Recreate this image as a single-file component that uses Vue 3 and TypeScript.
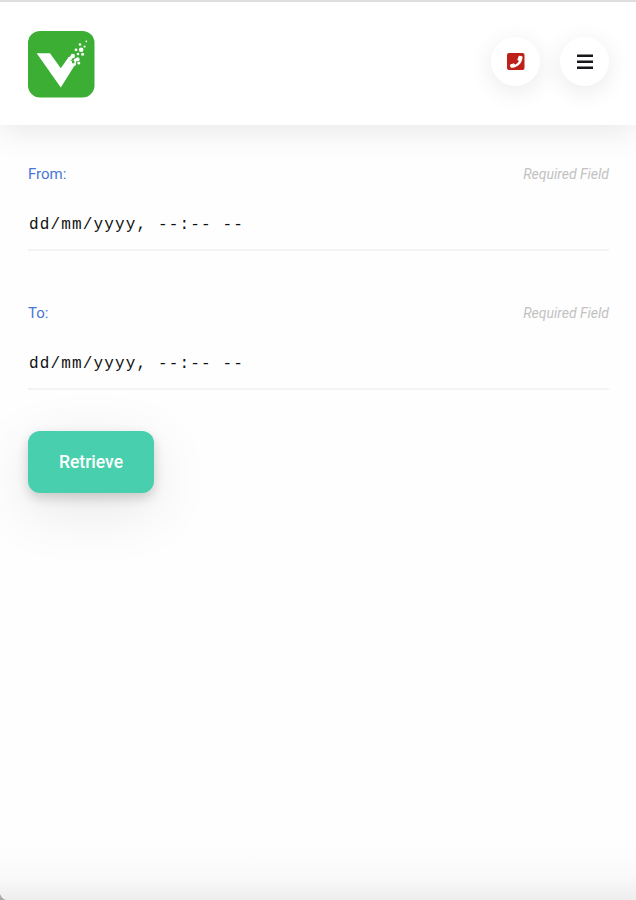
<script setup lang="ts">
interface Field {
  id: string
  label: string
}

const fields: Field[] = [
  { id: 'from', label: 'From:' },
  { id: 'to', label: 'To:' },
]
</script>

<template>
  <div class="page">
    <header class="header">
      <svg class="logo" viewBox="0 0 67 67" aria-label="Logo">
        <rect width="66.5" height="66.5" rx="12" fill="#3bae33" />
        <path fill="#fff" d="M8.7 22.2H22L32.8 37.2L40.5 26.2L43 25L44.5 27.5L42.5 30L45.5 29.5L47 27L49 29L47.5 33L32.8 56.5Z" />
        <g fill="#fff">
          <circle cx="44.8" cy="25" r="2.2" />
          <circle cx="49.6" cy="28.2" r="2" />
          <circle cx="50.8" cy="32" r="1.5" />
          <circle cx="46.3" cy="33.5" r="1.5" />
          <circle cx="53.2" cy="18.8" r="2.3" />
          <circle cx="48" cy="18.8" r="1.4" />
          <circle cx="50" cy="23" r="1.3" />
          <circle cx="54.6" cy="23.3" r="1.5" />
          <circle cx="52" cy="13.5" r="1.3" />
          <circle cx="56.6" cy="15.6" r="1.1" />
          <circle cx="58.3" cy="10.3" r=".9" />
        </g>
        <circle cx="45.2" cy="31" r="1.4" fill="#3bae33" />
      </svg>
      <nav class="actions">
        <button class="round" aria-label="Call">
          <svg class="icon" viewBox="0 0 18 18">
            <rect width="17.5" height="17" rx="2" fill="#bd2119" />
            <path fill="#fff" d="M12.6 2.7 15 3.3q.5.1.5.6C15.5 10 10.3 14.8 4.2 14.8q-.5 0-.6-.5L3 12.2q-.1-.5.4-.7l2.9-1.1q.4-.2.7.2l1.1 1.2q2.6-1.1 3.8-3.7l-1.3-1q-.4-.3-.2-.7l1.4-3.3q.3-.5.8-.4Z" />
          </svg>
        </button>
        <button class="round" aria-label="Menu">
          <svg class="icon" viewBox="0 0 18 18">
            <path fill="#17171b" d="M1 1.5h16v2.4H1zM1 7.5h16v2.4H1zM1 13.5h16v2.4H1z" />
          </svg>
        </button>
      </nav>
    </header>
    <main class="content">
      <section v-for="field in fields" :key="field.id" class="field">
        <div class="caption">
          <span class="label">{{ field.label }}</span>
          <em class="hint">Required Field</em>
        </div>
        <div class="value">dd/mm/yyyy, --:-- --</div>
      </section>
      <button class="submit">Retrieve</button>
    </main>
    <footer class="fade"></footer>
  </div>
</template>

<style>
body {
  margin: 0;
  background: #fff;
}
</style>

<style scoped>
.page {
  box-sizing: border-box;
  height: 900px;
  display: flex;
  flex-direction: column;
  overflow: hidden;
  border-top: 2px solid #dedede;
  background: #fefefe;
  font-family: Roboto, "Liberation Sans", sans-serif;
}

button {
  border: 0;
  padding: 0;
  font-family: inherit;
}

.header {
  box-sizing: border-box;
  height: 123px;
  flex: none;
  padding: 29px 27px 0 28px;
  display: flex;
  justify-content: space-between;
  align-items: flex-start;
  background: #fff;
  box-shadow: 0 4px 32px rgba(0, 0, 0, .1);
}

.logo {
  width: 67px;
  height: 67px;
}

.actions {
  display: flex;
  gap: 20px;
  padding-top: 6px;
}

.round {
  width: 49px;
  height: 49px;
  border-radius: 50%;
  display: flex;
  align-items: center;
  justify-content: center;
  background: #fff;
  box-shadow: 0 5px 24px rgba(0, 0, 0, .09);
}

.icon {
  width: 18px;
  height: 18px;
}

.content {
  flex: 1;
  padding: 37px 27px 0 28px;
}

.field {
  box-sizing: border-box;
  height: 89px;
  border-bottom: 2px solid #f3f3f3;
  margin-bottom: 50px;
}

.field:nth-of-type(2) {
  margin-bottom: 41px;
}

.caption {
  display: flex;
  justify-content: space-between;
  line-height: 24px;
}

.label {
  font-size: 15px;
  color: #4876d6;
}

.hint {
  font-size: 14px;
  color: #c2c2c2;
}

.value {
  margin-top: 27px;
  padding-left: 1px;
  font-family: "Liberation Mono", monospace;
  font-size: 16px;
  letter-spacing: 1.15px;
  line-height: 24px;
  color: #111;
}

.submit {
  display: block;
  width: 126px;
  height: 62px;
  border-radius: 12px;
  background: #48cfad;
  color: #fff;
  font-size: 17.5px;
  font-weight: 500;
  box-shadow: 0 5px 12px rgba(0, 0, 0, .17), 0 16px 60px rgba(0, 0, 0, .1);
}

.fade {
  height: 56px;
  background: linear-gradient(#fefefe, #fafafa 55%, #eee);
  border-bottom-left-radius: 8px;
  box-shadow: -4px 4px 0 4px #aaa;
  clip-path: inset(0);
}
</style>
